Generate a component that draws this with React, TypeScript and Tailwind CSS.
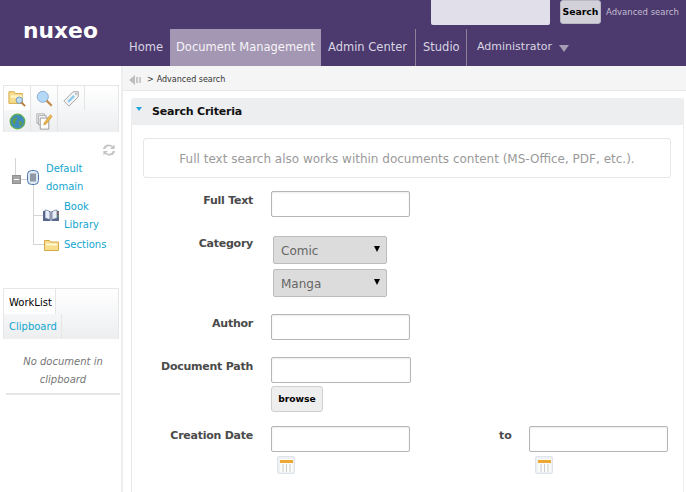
const font = { fontFamily: '"DejaVu Sans", Verdana, sans-serif' }

const FolderSearchIcon = () => (
    <svg width="18" height="18" viewBox="0 0 20 20">
        <path d="M1 3h6l1 2h8v11H1z" fill="#f6dc8c" stroke="#d2a63f" />
        <path d="M3 7h13v3H3z" fill="#fff3c4" />
        <circle cx="12.5" cy="12.5" r="3.5" fill="#bcdcf5" stroke="#6f93b5" />
        <path d="M15 15l4 4" stroke="#b8793a" strokeWidth="2" />
    </svg>
)

const SearchIcon = () => (
    <svg width="17" height="17" viewBox="0 0 20 20">
        <circle cx="8" cy="8" r="6.500" fill="#b5d8f7" stroke="#7ba3cc" />
        <path d="M12.5 12.5l6 6" stroke="#c28a4a" strokeWidth="2.5" />
    </svg>
)

const TagIcon = () => (
    <svg width="17" height="17" viewBox="0 0 20 20">
        <path d="M1 13L12 2h6v6L7 19z" fill="#f4f4f4" stroke="#9a9a9a" />
        <path d="M5 13l7-7 2 2-7 7z" fill="#8ecbef" />
        <circle cx="15.5" cy="4.5" r="1" fill="#fff" stroke="#888" strokeWidth="0.6" />
    </svg>
)

const GlobeIcon = () => (
    <svg width="17" height="17" viewBox="0 0 20 20">
        <circle cx="10" cy="10" r="8.500" fill="#3f8bc0" stroke="#5fae4f" strokeWidth="1.6" />
        <path d="M4 8c2-2 4-3 6-3 0 2-1 3-2 4s0 3-1 5c-2-1-3-3-3-6zM12 9c2 0 4 1 4 3-1 2-2 3-3 3-1-2-2-4-1-6z" fill="#5d9e50" />
    </svg>
)

const NotesIcon = () => (
    <svg width="17" height="17" viewBox="0 0 20 20">
        <path d="M1 1h9v11H1z" fill="#f3f3f3" stroke="#a5a5a5" />
        <path d="M3 3h9v11H3z" fill="#f3f3f3" stroke="#a5a5a5" />
        <path d="M5 6h10v13H5z" fill="#fff" stroke="#8f8f8f" />
        <path d="M9 14l1-3 7-9 2 2-7 9z" fill="#efb94b" stroke="#b6812a" strokeWidth="0.6" />
    </svg>
)

const RefreshIcon = () => (
    <svg width="14" height="14" viewBox="0 0 15 14" fill="#c4c4c4">
        <path d="M1 6c.5-3 3-5 6-5 2 0 3.500.8 4.500 2L13.500 1v5h-5l2-2C9.700 3.200 8.500 3 7.500 3 5.500 3 4 4.200 3.500 6z" />
        <path d="M14 8c-.5 3-3 5-6 5-2 0-3.500-.8-4.500-2L1.500 13V8h5l-2 2c.8.800 2 1 3 1 2 0 3.500-1.200 4-3z" />
    </svg>
)

const DomainIcon = () => (
    <svg width="12" height="15" viewBox="0 0 12 15">
        <rect x="0.500" y="0.500" width="11" height="14" rx="4" fill="#dfe9f5" stroke="#4d79ad" />
        <rect x="3" y="3.500" width="6" height="8" fill="#8f9aa6" />
    </svg>
)

const BookIcon = () => (
    <svg width="16" height="13" viewBox="0 0 16 13">
        <path d="M0 2h7.500v10H0zM8.500 2H16v10H8.500z" fill="#59688c" />
        <path d="M2 1c2 0 3.500.5 5 2v8c-1.500-1-3-1.500-5-1.500zM14 1c-2 0-3.500.5-5 2v8c1.500-1 3-1.500 5-1.500z" fill="#e8eef8" stroke="#44557a" strokeWidth="0.6" />
        <path d="M14.500 3h1v2h-1z" fill="#d86a3c" />
        <path d="M14.500 6h1v2h-1z" fill="#6cad52" />
    </svg>
)

const FolderIcon = () => (
    <svg width="15" height="12" viewBox="0 0 15 12">
        <path d="M.5 1.500h5l1 1.500h8v8.500H.5z" fill="#f7dd8c" stroke="#d6aa46" />
        <path d="M2 4.500h11v2H2z" fill="#fff6d2" />
    </svg>
)

const CalendarIcon = () => (
    <div className="w-[18px] h-[18px] bg-[#eef1f5] border border-[#dfe3ea] rounded-[2px] flex items-center justify-center">
        <svg width="13" height="13" viewBox="0 0 13 13">
            <rect x="0" y="0" width="13" height="13" fill="#fbfbf8" />
            <rect x="0" y="1" width="13" height="3" fill="#eda733" />
            <path d="M3 5v8M6.500 5v8M10 5v8" stroke="#c9ccd2" />
        </svg>
    </div>
)

const TextField = ({ w = "w-[139px]" }: { w?: string }) => (
    <input
        type="text"
        className={`${w} h-[26px] bg-white border border-[#b5b5b5] rounded-[2px] shadow-[inset_0_1px_2px_rgba(0,0,0,0.08)] outline-0`}
    />
)

const Select = ({ value }: { value: string }) => (
    <div className="w-[114px] h-[28px] bg-[#dcdcdc] border border-[#bcbcbc] rounded-[2px] flex items-center justify-between pl-[7px] pr-[6px] text-[12px] text-[#666]">
        <span className="pt-[1px]">{value}</span>
        <span className="w-0 h-0 border-x-[3.500px] border-x-transparent border-t-[6px] border-t-black mb-[2px]" />
    </div>
)

const Label = ({ children, up }: { children: string; up?: boolean }) => (
    <div className={`w-[122px] text-right text-[11px] tracking-[-0.25px] font-bold text-[#4a4a4a] leading-[18px] shrink-0 ${up ? "-mt-[1px]" : "pt-[1px]"}`}>{children}</div>
)

const Sidebar = () => (
    <aside className="w-[123px] shrink-0 border-r-2 border-[#eeeeee] pl-[3px] pt-[19px] h-[426px]">
        {/* navigation tabs */}
        <div className="w-[116px] h-[47px] border border-[#e6e6e6] border-b-0 bg-gradient-to-b from-white to-[#eceef0]">
            <div className="flex">
                <div className="w-[27px] h-[24px] bg-white border-r border-[#e4e4e4] flex items-center justify-center"><FolderSearchIcon /></div>
                <div className="w-[27px] h-[24px] border-r border-[#e4e4e4] flex items-center justify-center"><SearchIcon /></div>
                <div className="w-[27px] h-[24px] border-r border-[#e4e4e4] flex items-center justify-center"><TagIcon /></div>
            </div>
            <div className="flex">
                <div className="w-[27px] h-[22px] border-r border-[#e4e4e4] flex items-center justify-center"><GlobeIcon /></div>
                <div className="w-[27px] h-[22px] border-r border-[#e4e4e4] flex items-center justify-center"><NotesIcon /></div>
            </div>
        </div>

        <div className="flex justify-end pr-[5px] mt-[11px]"><RefreshIcon /></div>

        {/* tree */}
        <div className="relative h-[115px] text-[10px] leading-[18px] text-[#12a6cf]">
            <div className="absolute left-[12px] top-[1px] h-[18px] w-px bg-[#d5d5d5]" />
            <div className="absolute left-[30px] top-[27px] h-[60px] w-px bg-[#d5d5d5]" />
            <div className="absolute left-[30px] top-[58px] w-[10px] h-px bg-[#d5d5d5]" />
            <div className="absolute left-[30px] top-[87px] w-[11px] h-px bg-[#d5d5d5]" />
            <div className="absolute left-[18px] top-[22px] w-[6px] h-px bg-[#d5d5d5]" />
            <div className="absolute left-[9px] top-[18px] w-[9px] h-[9px] bg-[#a5a5a5] border border-[#8f8f8f] flex items-center justify-center">
                <span className="w-[5px] h-px bg-white" />
            </div>
            <div className="absolute left-[24px] top-[13px]"><DomainIcon /></div>
            <div className="absolute left-[43px] top-[3px] w-[50px]">Default domain</div>
            <div className="absolute left-[40px] top-[52px]"><BookIcon /></div>
            <div className="absolute left-[61px] top-[41px] w-[44px]">Book Library</div>
            <div className="absolute left-[41px] top-[82px]"><FolderIcon /></div>
            <div className="absolute left-[61px] top-[79px]">Sections</div>
        </div>

        {/* worklist */}
        <div className="mt-[16px] w-[116px] h-[51px] border border-[#e6e6e6] border-b-0 bg-gradient-to-b from-white to-[#eceef0] text-[10px]">
            <div className="w-[52px] h-[25px] bg-white border-r border-[#e6e6e6] flex items-center pl-[5px] pt-[1px] text-black">WorkList</div>
            <div className="w-[58px] h-[25px] border-r border-[#e6e6e6] flex items-center pl-[5px] text-[#12a6cf]">Clipboard</div>
        </div>
        <div className="w-[114px] ml-[3px] pt-[14px] h-[56px] border-b-2 border-[#e6e6e6] text-center italic text-[10px] leading-[18px] text-[#777] px-[10px]">
            No document in clipboard
        </div>
    </aside>
)

const App = () => {
    return (
        <div style={font} className="w-[686px] h-[492px] overflow-hidden bg-white flex flex-col">
            {/* top header */}
            <header className="relative h-[66px] shrink-0 bg-[#4c3a6e] flex items-end pl-[129px]">
                <div className="absolute left-[23px] top-[16px] text-[21.800px] font-bold leading-[30px] text-white">nuxeo</div>
                <div className="absolute left-[431px] top-0 w-[119px] h-[25px] bg-[#e0dfea] rounded-b-[2px]" />
                <button className="absolute left-[560px] top-0 w-[41px] h-[24px] bg-[#d2d1da] border border-[#b9b7c4] rounded-[3px] text-[9.3px] font-bold text-black">Search</button>
                <div className="absolute left-[606px] top-[5px] text-[8.5px] leading-[14px] text-[#c3bdd2]">Advanced search</div>

                <nav className="h-[37px] flex text-[11.5px] text-[#d9d5e2]">
                    <div className="w-[41px] flex items-center pt-[1px]">Home</div>
                    <div className="w-[151px] flex items-center justify-center pt-[1px] bg-[#a497b3] text-[#f6f4f8]">Document Management</div>
                    <div className="w-[95px] flex items-center pl-[7px] pt-[1px] border-r border-[#8d8199]">Admin Center</div>
                    <div className="w-[51px] flex items-center pl-[7px] pt-[1px] border-r border-[#8d8199]">Studio</div>
                    <div className="flex items-center pl-[10px] gap-[7px] text-[11px]">
                        Administrator
                        <span className="w-0 h-0 border-x-[5.500px] border-x-transparent border-t-[7px] border-t-[#a59db3] mt-[2px]" />
                    </div>
                </nav>
            </header>

            <div className="flex flex-1">
                <Sidebar />

                <main className="flex-1 min-w-0">
                    {/* breadcrumb */}
                    <div className="h-[25px] bg-[#f5f5f5] border-b border-[#e8e8e8] flex items-center pl-[6px] pt-[3px] text-[8px] text-[#333]">
                        <svg width="13" height="10" viewBox="0 0 13 10" className="mr-[5px]">
                            <path d="M0 5l6-5v10z" fill="#bdbdbd" />
                            <path d="M7 2h2v6H7zM10 2h2v6h-2z" fill="#c8c8c8" />
                        </svg>
                        <span className="mr-[3px]">&gt;</span>
                        Advanced search
                    </div>

                    {/* search panel */}
                    <section className="mt-[7px] ml-[8px] mr-[2px] border-r border-[#eeeeee]">
                        <div className="h-[27px] bg-[#edeef0] rounded-t-[3px] flex items-center pl-[5px] pt-[2px] text-[11px] tracking-[-0.2px] font-bold text-[#111]">
                            <span className="w-0 h-0 border-x-[3.500px] border-x-transparent border-t-[4px] border-t-[#20a4e0] mb-[7px] mr-[10px]" />
                            Search Criteria
                        </div>

                        <div className="border-l border-[#e8e8e8] pl-[11px] pr-[12px] pt-[13px] h-[369px]">
                            <div className="h-[40px] pt-[2px] border border-[#e6e6e6] rounded-[3px] flex items-center justify-center text-[12px] text-[#9a9a9a]">
                                Full text search also works within documents content (MS-Office, PDF, etc.).
                            </div>

                            <div className="flex mt-[13px] -ml-[12px]">
                                <Label>Full Text</Label>
                                <div className="ml-[18px]"><TextField /></div>
                            </div>

                            <div className="flex mt-[19px] -ml-[12px]">
                                <Label up>Category</Label>
                                <div className="ml-[20px] flex flex-col gap-[5px]">
                                    <Select value="Comic" />
                                    <Select value="Manga" />
                                </div>
                            </div>

                            <div className="flex mt-[17px] -ml-[12px]">
                                <Label>Author</Label>
                                <div className="ml-[18px]"><TextField /></div>
                            </div>

                            <div className="flex mt-[17px] -ml-[12px]">
                                <Label>Document Path</Label>
                                <div className="ml-[18px] flex flex-col gap-[3px]">
                                    <TextField w="w-[140px]" />
                                    <button className="w-[52px] h-[26px] bg-[#eeeeee] border border-[#cfcfcf] rounded-[3px] text-[9.2px] font-bold text-black">browse</button>
                                </div>
                            </div>

                            <div className="flex mt-[14px] -ml-[12px]">
                                <Label>Creation Date</Label>
                                <div className="ml-[18px] w-[228px]">
                                    <TextField />
                                    <div className="ml-[6px] mt-[4px]"><CalendarIcon /></div>
                                </div>
                                <div className="w-[30px] text-[11px] font-bold leading-[18px] pt-[1px] text-[#4a4a4a]">to</div>
                                <div>
                                    <TextField />
                                    <div className="ml-[6px] mt-[4px]"><CalendarIcon /></div>
                                </div>
                            </div>
                        </div>
                    </section>
                </main>
            </div>
        </div>
    )
}

export default App
